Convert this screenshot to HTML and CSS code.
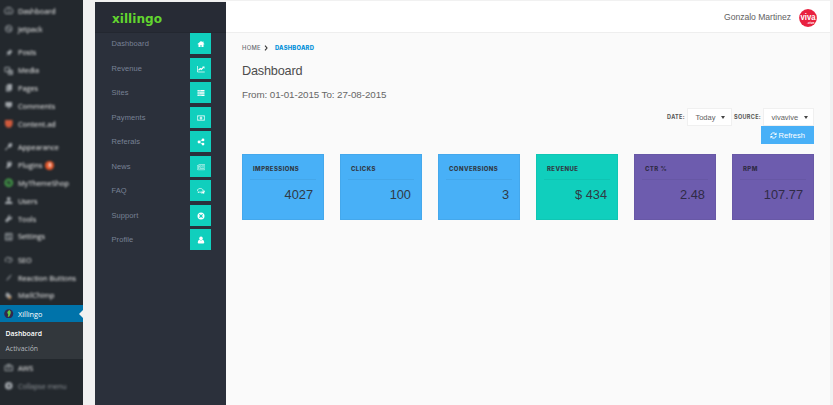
FILE: index.html
```
<!DOCTYPE html>
<html lang="en">
<head>
<meta charset="utf-8">
<title>Dashboard</title>
<link rel="stylesheet" href="styles.css">
</head>
<body>
<div class="app">
  <aside class="admin">
    <ul class="group">
      <li><svg viewBox="0 0 20 20"><path d="M10 3a8 8 0 0 0-7 13h14a8 8 0 0 0-7-13zM6 9l3 3M10 5v3M14 9l-3 4" class="line"/></svg><span>Dashboard</span></li>
      <li><svg viewBox="0 0 20 20"><circle cx="10" cy="10" r="7" class="line"/><path d="M9 4v7H5zM11 16V9h4z"/></svg><span>Jetpack</span></li>
    </ul>
    <ul class="group">
      <li><svg viewBox="0 0 20 20"><path d="M12 2l6 6-2 1-3 4-1 3-3-3-6 5 5-6-3-3 3-1 4-3z"/></svg><span>Posts</span></li>
      <li><svg viewBox="0 0 20 20"><path d="M2 3h10v9H2zM9 9h9v9H9z" class="line"/><path d="M12 11h4v5h-4z"/></svg><span>Media</span></li>
      <li><svg viewBox="0 0 20 20"><path d="M7 2h10v13H7zM4 5h2v11h8v2H4z"/></svg><span>Pages</span></li>
      <li><svg viewBox="0 0 20 20"><path d="M3 2h14v10h-4l-4 6v-6H3z"/></svg><span>Comments</span></li>
      <li><svg viewBox="0 0 20 20" class="orange"><path d="M2 2h16v10l-4 6H6l-4-6z"/></svg><span>Content.ad</span></li>
    </ul>
    <ul class="group">
      <li><svg viewBox="0 0 20 20"><path d="M10 3l7-1v7l-5 3-3-1-5 7-2-2 6-6z"/></svg><span>Appearance</span></li>
      <li><svg viewBox="0 0 20 20"><path d="M8 2h2v4h3V2h2v4h2l-2 7-4 2-5 3-2-2 3-3-1-7h2z"/></svg><span>Plugins</span><b class="count">8</b></li>
      <li><svg viewBox="0 0 20 20" class="green"><circle cx="10" cy="10" r="7" class="line thick"/><path d="M7 10l2 3 4-6" class="line"/></svg><span>MyThemeShop</span></li>
      <li><svg viewBox="0 0 20 20"><circle cx="10" cy="6" r="4"/><path d="M2 17q0-6 6-6h4q6 0 6 6z"/></svg><span>Users</span></li>
      <li><svg viewBox="0 0 20 20"><path d="M17 5l-4 3-2-2 3-4q-6-1-6 5l-6 7 4 4 6-6q6 0 5-7z"/></svg><span>Tools</span></li>
      <li><svg viewBox="0 0 20 20"><path d="M3 3h14v14H3zM5 7h10M5 13h10M8 5v4M12 11v4" class="line"/></svg><span>Settings</span></li>
    </ul>
    <ul class="group">
      <li><svg viewBox="0 0 20 20"><path d="M4 15q-4-10 5-10 4 0 2 5M8 14q8 3 9-2 1-7-5-6" class="line"/></svg><span>SEO</span></li>
      <li><svg viewBox="0 0 20 20"><path d="M17 2q-7 3-11 10l-2 5 5-3q6-6 8-12z" opacity=".6"/></svg><span>Reaction Buttons</span></li>
      <li><svg viewBox="0 0 20 20"><path d="M5 3q5 0 8 5l3 3-2 6-6-2-5-5z"/><path d="M9 10l7 4-5 4z" fill="#c78542"/></svg><span>MailChimp</span></li>
    </ul>
    <div class="current">
      <svg viewBox="0 0 20 20"><circle cx="10" cy="10" r="9.500" fill="#33284e"/><path d="M11 2q5 3 3 7-1 4-3 7l-3 1 1-6q-5-4 2-9z" fill="#62cb42"/></svg><span>Xillingo</span>
    </div>
    <div class="submenu"><b>Dashboard</b><span>Activación</span></div>
    <ul class="group tail">
      <li><svg viewBox="0 0 20 20"><path d="M7 6V3h6v3M2 6h16v10H2zM6 10h8" class="line"/></svg><span>AWS</span></li>
      <li class="collapse"><svg viewBox="0 0 20 20"><circle cx="10" cy="10" r="8"/><path d="M12 6l-5 4 5 4z" fill="#23282d"/></svg><span>Collapse menu</span></li>
    </ul>
  </aside>

  <nav class="side">
    <div class="logo">xillingo</div>
    <ul class="nav">
      <li><span>Dashboard</span><i><svg viewBox="0 0 16 16"><path d="M8 2L1 8l1 1 1-.7V14h4v-4h2v4h4V8.300l1 .7 1-1-2-1.700V3h-2v1.500z"/></svg></i></li>
      <li><span>Revenue</span><i><svg viewBox="0 0 16 16"><path d="M1 2v12h14.500" class="stroke"/><path d="M3 10.500l3.500-3.500 2 2L13 4.500" class="stroke bold"/><path d="M10.500 3H15v4.500z"/></svg></i></li>
      <li><span>Sites</span><i><svg viewBox="0 0 16 16"><path d="M1 2h14v3.200H1zM1 6.500h14v3.200H1zM1 11h14v3.200H1z"/><path d="M3 3.600h5M3 8.100h3M3 12.600h6" stroke="#10cfbd" stroke-width=".7"/></svg></i></li>
      <li><span>Payments</span><i><svg viewBox="0 0 16 16"><path d="M.8 3.500h14.400v9H.8z" class="stroke"/><path d="M3 5h1.500L3 6.500zM13 5h-1.500L13 6.500zM3 11h1.500L3 9.500zM13 11h-1.500L13 9.500z"/><ellipse cx="8" cy="8" rx="2.600" ry="3.200"/><path d="M8 6v4" stroke="#10cfbd"/></svg></i></li>
      <li><span>Referals</span><i><svg viewBox="0 0 16 16"><path d="M12 3.500L4 8l8 4.500" class="stroke"/><circle cx="12" cy="3.800" r="2.800"/><circle cx="4" cy="8" r="2.800"/><circle cx="12" cy="12.200" r="2.800"/></svg></i></li>
      <li><span>News</span><i><svg viewBox="0 0 16 16"><path d="M3 3h12.500v10.500H2Q.5 13.500.5 12V5H3v7M5 5.500h3.500v3H5zM10 5.500h4M10 8h4M5 11h9" class="stroke thin"/></svg></i></li>
      <li><span>FAQ</span><i><svg viewBox="0 0 16 16"><path d="M6.500 3C3.500 3 1 4.500 1 6.700c0 1.200.8 2.200 2 2.800l-.8 1.800L5 10.200c4 .6 7-1.100 7-3.500C12 4.500 9.500 3 6.500 3z" class="stroke"/><path d="M13.500 6c3 2 2.500 4.700.3 6l1 2-3.200-1.300c-2 .3-4-.1-5.100-1.200 4 0 7-2 7-5.500z"/></svg></i></li>
      <li><span>Support</span><i><svg viewBox="0 0 16 16"><circle cx="8" cy="8" r="5" fill="none" stroke="#fff" stroke-width="4"/><path d="M3.500 3.500l2.700 2.700M12.500 3.500L9.800 6.200M3.500 12.500l2.700-2.700M12.500 12.500L9.800 9.800" stroke="#10cfbd" stroke-width="1.300"/></svg></i></li>
      <li><span>Profile</span><i><svg viewBox="0 0 16 16"><circle cx="8" cy="4.800" r="3.600"/><path d="M4.500 7.500Q8 10.500 11.500 7.500q3 1 3 5.500 0 2-2 2h-9q-2 0-2-2 0-4.500 3-5.500z"/></svg></i></li>
    </ul>
  </nav>

  <div class="page">
    <header class="top">
      <span>Gonzalo Martinez</span>
      <svg class="avatar" viewBox="0 0 18 18"><circle cx="9" cy="9" r="8.900" fill="#e8213f"/><text x="9" y="11" text-anchor="middle" textLength="15" lengthAdjust="spacingAndGlyphs" class="viva">viva</text><text x="8" y="15.200" class="vive">.vive</text></svg>
    </header>
    <main class="content">
      <div class="crumbs"><span>HOME</span><svg viewBox="0 0 4 6"><path d="M1 .7L3 3 1 5.300"/></svg><b>DASHBOARD</b></div>
      <h1>Dashboard</h1>
      <p class="range">From: 01-01-2015 To: 27-08-2015</p>
      <div class="filters">
        <label>DATE:</label><div class="select today"><span>Today</span><i></i></div>
        <label>SOURCE:</label><div class="select source"><span>vivavive</span><i></i></div>
      </div>
      <button class="refresh"><svg viewBox="0 0 16 16"><path d="M2 7a6 6 0 0 1 10.500-3M14 9a6 6 0 0 1-10.500 3"/><path d="M15 1v6H9zM1 15V9h6z" class="tip"/></svg><span>Refresh</span></button>
      <section class="cards">
        <article class="card"><h2>IMPRESSIONS</h2><strong>4027</strong></article>
        <article class="card"><h2>CLICKS</h2><strong>100</strong></article>
        <article class="card"><h2>CONVERSIONS</h2><strong>3</strong></article>
        <article class="card teal"><h2>REVENUE</h2><strong>$ 434</strong></article>
        <article class="card purple"><h2>CTR %</h2><strong>2.48</strong></article>
        <article class="card purple"><h2>RPM</h2><strong>107.77</strong></article>
      </section>
    </main>
  </div>
</div>
</body>
</html>
```
FILE: styles.css
```
* { box-sizing: border-box; margin: 0; padding: 0; }
body { width: 833px; height: 405px; overflow: hidden; background: #f1f1f1; font-family: "Liberation Sans", Arial, sans-serif; }
ul { list-style: none; }
.app { display: flex; height: 405px; }

.admin { width: 83px; flex: none; background: #23282d; padding-top: 2.300px; font-family: "Open Sans", sans-serif; font-size: 7.300px; color: #eee; overflow: hidden; }
.group { margin-bottom: 5.600px; }
.group li { height: 17.840px; display: flex; align-items: center; padding-left: 4px; filter: blur(.8px); white-space: nowrap; }
.admin svg { width: 9.500px; height: 9.500px; margin-right: 4.500px; fill: #a0a5aa; flex: none; }
.admin .line { fill: none; stroke: #a0a5aa; stroke-width: 2; }
.admin .orange { fill: #d05a3c; }
.admin .green .line { stroke: #45a049; }
.admin .green .thick { stroke-width: 4; }
.count { width: 9px; height: 9px; margin-left: 3px; border-radius: 50%; background: #e4572a; color: #fff; font-size: 5px; line-height: 9px; text-align: center; }
.current { position: relative; height: 17.600px; margin-top: -5.200px; display: flex; align-items: center; padding-left: 4px; background: #0073aa; color: #fff; }
.current::after { content: ""; position: absolute; right: 0; top: 4.900px; border: 4px solid transparent; border-right-color: #f1f1f1; border-left: 0; }
.submenu { height: 36.800px; background: #32373c; padding: 4.900px 0 0 5.500px; display: flex; flex-direction: column; font-size: 6.900px; line-height: 14.500px; color: #b4b9be; }
.submenu b { color: #fff; font-weight: 600; }
.group.tail { margin: 0; }
.collapse { color: #8c9196; letter-spacing: -.14px; }

.side { width: 131px; flex: none; margin: 2px 0 0 12px; background: #2b303b; }
.logo { height: 31px; padding: 0 0 0 17px; background: #272b35; border-bottom: 1px solid #232730; color: #62d52f; font: bold 12.100px/34px "DejaVu Sans", sans-serif; }
.nav li { height: 21px; margin-bottom: 3.500px; padding: 0 15px 0 16.500px; display: flex; align-items: center; justify-content: space-between; color: #788195; font-size: 7.500px; letter-spacing: .08px; }
.nav i { width: 21px; height: 21px; background: #10cfbd; display: flex; align-items: center; justify-content: center; }
.nav svg { width: 8px; height: 8px; fill: #fff; margin-top: 1px; }
.nav .stroke { fill: none; stroke: #fff; stroke-width: 1.400; }
.nav .bold { stroke-width: 2.200; }
.nav .thin { stroke-width: 1; }

.page { width: 604px; flex: none; margin-top: 1px; background: #fafafa; }
.top { height: 32px; padding: 3px 13px 0 0; display: flex; align-items: center; justify-content: flex-end; background: #fff; border-bottom: 1px solid #eee; color: #626262; font-size: 8.600px; }
.top span { letter-spacing: -.02px; margin-top: -2px; }
.avatar { width: 18px; height: 18px; margin-left: 8px; overflow: visible; }
.viva { font: bold 9.500px "Liberation Sans", sans-serif; fill: #fff; }
.vive { font: bold 3.300px "Liberation Sans", sans-serif; fill: #fff; }
.content { padding: 0 16px; }
.crumbs { height: 29px; display: flex; align-items: center; font: 500 5.800px Inter, sans-serif; color: #6b6d72; letter-spacing: .35px; }
.crumbs svg { width: 4px; height: 6px; margin: 0 6.500px 0 3.500px; fill: none; stroke: #333; stroke-width: 1.100; }
.crumbs b { color: #0090d9; font-weight: 800; letter-spacing: .24px; }
h1 { height: 20px; line-height: 19px; font-size: 12.700px; letter-spacing: -.2px; font-weight: 400; color: #4d4d4d; }
.range { height: 20px; margin-top: 3px; line-height: 19px; font-size: 9.800px; letter-spacing: -.08px; color: #666; }
.filters { display: flex; height: 18px; margin-top: 3px; align-items: center; justify-content: flex-end; }
.filters label { font: 700 5.500px Inter, sans-serif; color: #555; letter-spacing: .33px; }
.select { height: 18px; display: flex; align-items: center; justify-content: space-between; border: 1px solid #f0f0f0; background: #fff; color: #626262; font-size: 7.500px; }
.select i { border: 2.500px solid transparent; border-top: 3px solid #444; border-bottom: 0; }
.today { width: 45px; margin: 0 2px; padding: 0 6px 0 7.500px; }
.source { width: 51px; margin-left: 2px; padding: 0 5.500px 0 7.500px; }
.refresh { display: flex; align-items: center; justify-content: center; width: 53.500px; height: 18px; margin-left: auto; border: 0; background: #48b0f7; color: #fff; font: 7.500px "Liberation Sans", sans-serif; }
.refresh svg { width: 7px; height: 7px; margin-right: 2px; fill: none; stroke: #fff; stroke-width: 2.200; }
.refresh .tip { fill: #fff; stroke: none; }
.cards { display: grid; grid-template-columns: repeat(6, 82px); gap: 16px; margin-top: 9.500px; }
.card { height: 66px; padding: 8px 8px 0; background: #48b0f7; box-shadow: inset 0 0 0 1px rgba(0,0,0,.045); color: #303a46; }
.card h2 { height: 18px; padding-left: 3px; border-bottom: 1px solid rgba(0,0,0,.05); font: 800 6px/14px Inter, sans-serif; letter-spacing: .4px; }
.card strong { display: block; padding-right: 3px; text-align: right; font-size: 12.800px; font-weight: 400; line-height: 30px; }
.teal { background: #10cfbd; }
.purple { background: #6d5cae; color: #302b46; }
```
